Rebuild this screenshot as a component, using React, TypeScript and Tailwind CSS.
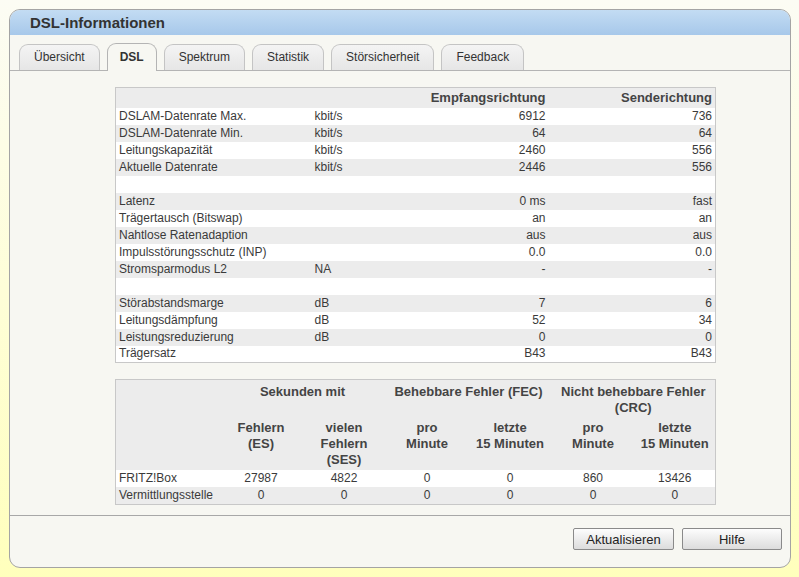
import React from 'react';

const tabs = ['Übersicht', 'DSL', 'Spektrum', 'Statistik', 'Störsicherheit', 'Feedback'];

type Row = { label: string; unit: string; rx: string; tx: string } | null;

const dslRows: Row[] = [
  { label: 'DSLAM-Datenrate Max.', unit: 'kbit/s', rx: '6912', tx: '736' },
  { label: 'DSLAM-Datenrate Min.', unit: 'kbit/s', rx: '64', tx: '64' },
  { label: 'Leitungskapazität', unit: 'kbit/s', rx: '2460', tx: '556' },
  { label: 'Aktuelle Datenrate', unit: 'kbit/s', rx: '2446', tx: '556' },
  null,
  { label: 'Latenz', unit: '', rx: '0 ms', tx: 'fast' },
  { label: 'Trägertausch (Bitswap)', unit: '', rx: 'an', tx: 'an' },
  { label: 'Nahtlose Ratenadaption', unit: '', rx: 'aus', tx: 'aus' },
  { label: 'Impulsstörungsschutz (INP)', unit: '', rx: '0.0', tx: '0.0' },
  { label: 'Stromsparmodus L2', unit: 'NA', rx: '-', tx: '-' },
  null,
  { label: 'Störabstandsmarge', unit: 'dB', rx: '7', tx: '6' },
  { label: 'Leitungsdämpfung', unit: 'dB', rx: '52', tx: '34' },
  { label: 'Leistungsreduzierung', unit: 'dB', rx: '0', tx: '0' },
  { label: 'Trägersatz', unit: '', rx: 'B43', tx: 'B43' },
];

const errorRows = [
  { label: 'FRITZ!Box', values: ['27987', '4822', '0', '0', '860', '13426'] },
  { label: 'Vermittlungsstelle', values: ['0', '0', '0', '0', '0', '0'] },
];

function Tab({ name, active }: { name: string; active: boolean }) {
  if (active) {
    return (
      <div className="relative -mb-px h-[28px] px-[12px] flex items-center justify-center rounded-t-[9px] border border-b-0 border-[#b4b4b4] bg-[#f7f7f2] font-bold text-[#333]">
        {name}
      </div>
    );
  }
  return (
    <div className="h-[26px] px-[14px] flex items-center justify-center rounded-t-[9px] border border-b-0 border-[#c4c4c4] bg-gradient-to-b from-[#f4f4f4] to-[#e6e6e6] text-[#333]">
      {name}
    </div>
  );
}

export default function App() {
  return (
    <div
      className="w-[799px] h-[577px] p-[9px] bg-gradient-to-b from-[#fcfcf4] via-[#fefed8] to-[#ffffbc] text-[12px] leading-[15px] text-[#3a3a3a]"
      style={{ fontFamily: '"Liberation Sans", Arial, sans-serif' }}
    >
      <div className="w-[782px] h-[559px] flex flex-col rounded-[11px] border border-[#a4a4a4] bg-[#f7f7f2] overflow-hidden">
        {/* Title bar */}
        <div className="h-[25px] shrink-0 flex items-center pl-[20px] bg-gradient-to-b from-[#c3dcf3] to-[#a7c8ea] text-[15px] font-bold text-[#333]">
          DSL-Informationen
        </div>

        {/* Tabs */}
        <div className="mt-[10px] flex items-end gap-[7px] pl-[9px] border-b border-[#b4b4b4] h-[26px]">
          {tabs.map(t => (
            <Tab key={t} name={t} active={t === 'DSL'} />
          ))}
        </div>

        {/* Content */}
        <div className="flex-1 flex flex-col pl-[105px] pt-[16px]">
          <table className="w-[600px] border border-[#c8c8c8] border-collapse table-fixed">
            <colgroup>
              <col className="w-[196px]" />
              <col className="w-[100px]" />
              <col className="w-[137px]" />
              <col className="w-[167px]" />
            </colgroup>
            <thead>
              <tr className="h-[20px] bg-[#ececec] font-bold text-[13px] text-[#444]">
                <th className="p-0"></th>
                <th className="p-0"></th>
                <th className="p-0 text-right pr-[3px] font-bold">Empfangsrichtung</th>
                <th className="p-0 text-right pr-[3px] font-bold">Senderichtung</th>
              </tr>
            </thead>
            <tbody>
              {dslRows.map((r, i) => (
                <tr key={i} className={`h-[17px] ${i % 2 === 0 ? 'bg-white' : 'bg-[#ececec]'}`}>
                  <td className="pl-[3px] whitespace-nowrap">{r?.label}</td>
                  <td className="pl-[3px]">{r?.unit}</td>
                  <td className="text-right pr-[3px]">{r?.rx}</td>
                  <td className="text-right pr-[3px]">{r?.tx}</td>
                </tr>
              ))}
            </tbody>
          </table>

          <table className="mt-[16px] w-[600px] border border-[#c8c8c8] border-collapse table-fixed">
            <colgroup>
              <col className="w-[104px]" />
              <col className="w-[83px]" />
              <col className="w-[83px]" />
              <col className="w-[83px]" />
              <col className="w-[83px]" />
              <col className="w-[83px]" />
              <col className="w-[81px]" />
            </colgroup>
            <thead className="bg-[#ececec] text-[13px] leading-[16px] text-[#444]">
              <tr>
                <th className="pt-[4px] pb-[2px]"></th>
                <th colSpan={2} className="pt-[4px] pb-[2px] align-top font-bold">Sekunden mit</th>
                <th colSpan={2} className="pt-[4px] pb-[2px] align-top font-bold">Behebbare Fehler (FEC)</th>
                <th colSpan={2} className="pt-[4px] pb-[2px] px-[4px] align-top font-bold">Nicht behebbare Fehler (CRC)</th>
              </tr>
              <tr>
                <th className="py-[2px]"></th>
                <th className="py-[2px] align-top font-bold">Fehlern<br />(ES)</th>
                <th className="py-[2px] align-top font-bold">vielen<br />Fehlern<br />(SES)</th>
                <th className="py-[2px] align-top font-bold">pro<br />Minute</th>
                <th className="py-[2px] align-top font-bold">letzte<br />15 Minuten</th>
                <th className="py-[2px] align-top font-bold">pro<br />Minute</th>
                <th className="py-[2px] align-top font-bold">letzte<br />15 Minuten</th>
              </tr>
            </thead>
            <tbody>
              {errorRows.map((r, i) => (
                <tr key={r.label} className={`h-[17px] ${i === 0 ? 'bg-white' : 'bg-[#ececec]'}`}>
                  <td className="pl-[3px] whitespace-nowrap">{r.label}</td>
                  {r.values.map((v, j) => (
                    <td key={j} className="text-center">{v}</td>
                  ))}
                </tr>
              ))}
            </tbody>
          </table>
        </div>

        {/* Footer */}
        <div className="h-[52px] shrink-0 border-t border-[#a8a8a8] flex items-start justify-end gap-[8px] pt-[12px] pr-[8px]">
          <button className="w-[101px] h-[22px] rounded-[2px] border border-[#8a8a8a] bg-gradient-to-b from-[#fdfdfd] to-[#dcdcdc] text-[13px] text-[#222]">
            Aktualisieren
          </button>
          <button className="w-[100px] h-[22px] rounded-[2px] border border-[#8a8a8a] bg-gradient-to-b from-[#fdfdfd] to-[#dcdcdc] text-[13px] text-[#222]">
            Hilfe
          </button>
        </div>
      </div>
    </div>
  );
}
